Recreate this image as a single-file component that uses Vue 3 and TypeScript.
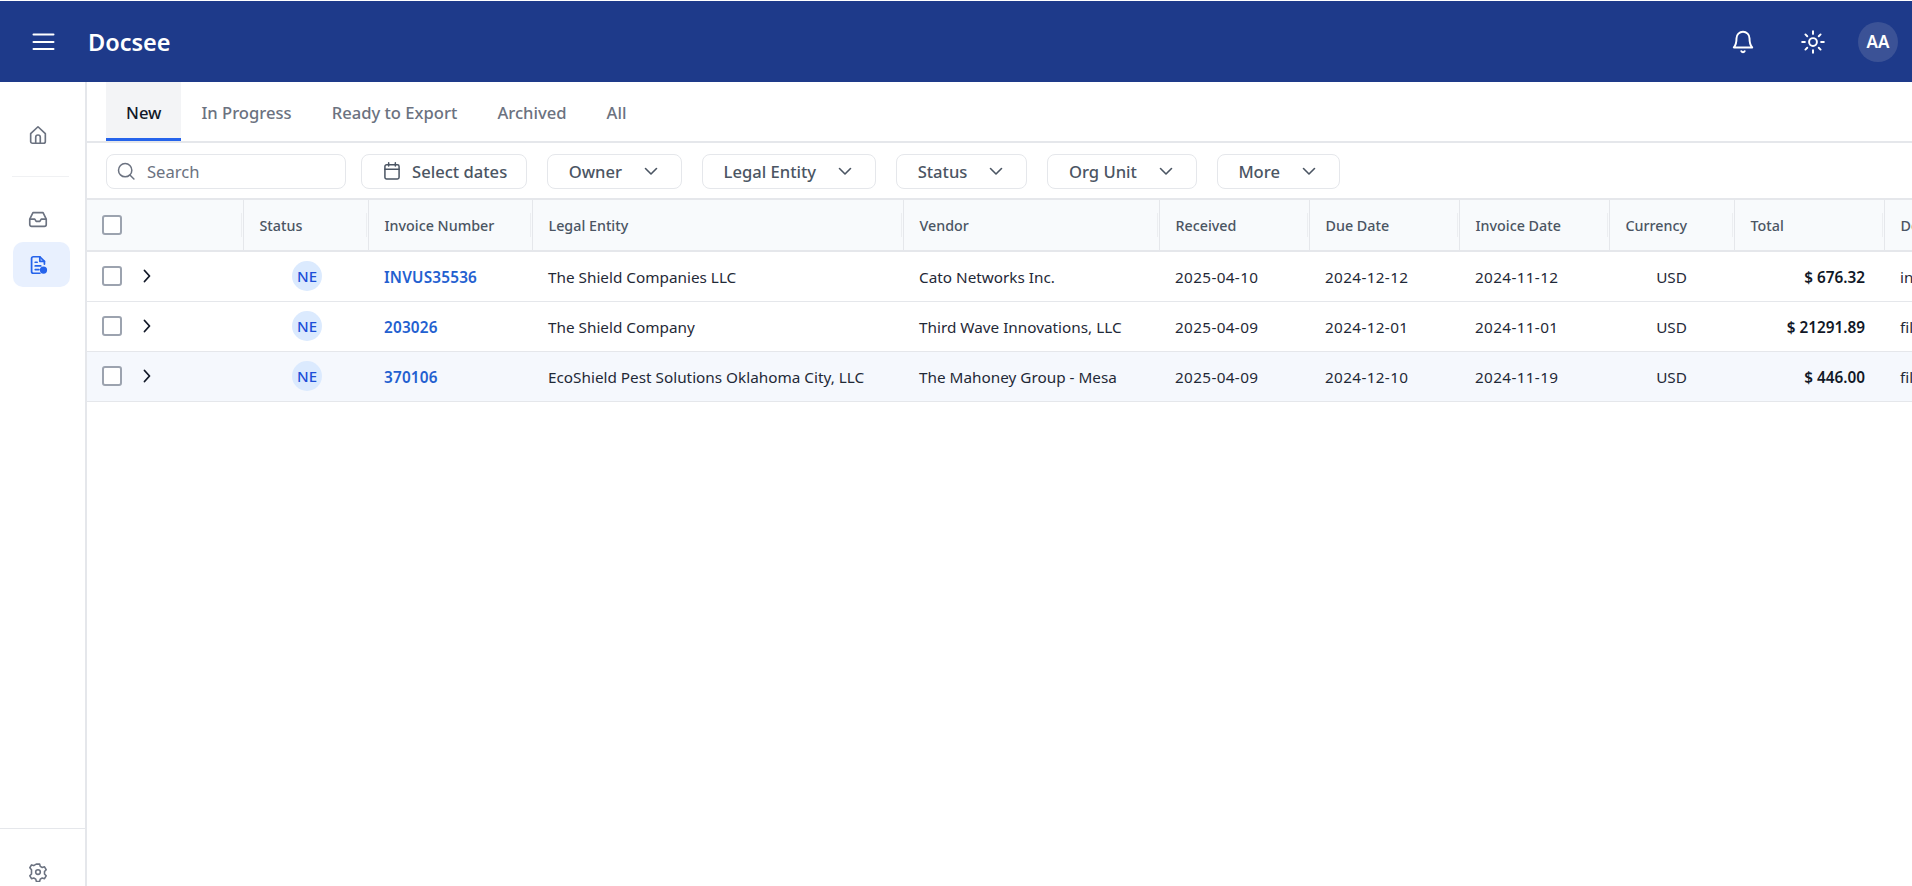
<template>
  <div class="app">
    <header class="topbar">
      <button class="menu-btn">
        <svg width="24" height="24" viewBox="0 0 24 24" fill="none" stroke="currentColor" stroke-width="2" stroke-linecap="round">
          <path d="M2.500 4.500h20M2.500 12h20M2.500 19h20" />
        </svg>
      </button>
      <div class="logo">Docsee</div>
      <div class="topbar-right">
        <svg class="bell" width="26" height="26" viewBox="0 0 24 24" fill="none" stroke="currentColor" stroke-width="1.800" stroke-linecap="round" stroke-linejoin="round">
          <path d="M18 8.500a6 6 0 0 0-12 0c0 6-2.500 8.500-2.500 8.500h17S18 14.500 18 8.500" />
          <path d="M10.500 20.500a1.700 1.700 0 0 0 3 0" />
        </svg>
        <svg class="sun" width="26" height="26" viewBox="0 0 24 24" fill="none" stroke="currentColor" stroke-width="1.800" stroke-linecap="round">
          <circle cx="12" cy="12" r="3.600" />
          <path d="M12 2v2.500M12 19.500V22M2 12h2.500M19.500 12H22M5 5l1.700 1.700M17.300 17.300 19 19M5 19l1.700-1.700M17.300 6.700 19 5" />
        </svg>
        <div class="avatar">AA</div>
      </div>
    </header>

    <div class="body">
      <aside class="sidebar">
        <div class="side-top">
          <div class="side-btn">
            <svg width="22" height="22" viewBox="0 0 24 24" fill="none" stroke="currentColor" stroke-width="1.800" stroke-linejoin="round">
              <path d="M4 10.500 12 3l8 7.500V19a2 2 0 0 1-2 2H6a2 2 0 0 1-2-2z" />
              <path d="M9.500 21v-6.500a2.500 2.500 0 0 1 5 0V21" />
            </svg>
          </div>
          <div class="side-sep"></div>
          <div class="side-btn inbox">
            <svg width="22" height="22" viewBox="0 0 24 24" fill="none" stroke="currentColor" stroke-width="1.800" stroke-linejoin="round">
              <path d="M6.500 4h11L21 11v6a2 2 0 0 1-2 2H5a2 2 0 0 1-2-2v-6z" />
              <path d="M3 11h5.500l1.500 2.500h4l1.500-2.500H21" />
            </svg>
          </div>
          <div class="side-btn active">
            <svg width="22" height="22" viewBox="0 0 24 24" fill="none" stroke="currentColor" stroke-width="1.900" stroke-linecap="round" stroke-linejoin="round">
              <path d="M19 11V8l-5-5H7a2 2 0 0 0-2 2v14a2 2 0 0 0 2 2h7" />
              <path d="M14 3v5h5M9 9h2M9 13h6M9 17h4" />
              <circle cx="18" cy="17.500" r="3" fill="currentColor" />
            </svg>
          </div>
        </div>
        <div class="side-bottom">
          <svg width="20" height="20" viewBox="0 0 24 24" fill="none" stroke="currentColor" stroke-width="1.900" stroke-linejoin="round">
            <path d="M10 2.500h4l.7 2.700 2.400 1.400 2.700-.8 2 3.400-2 2.300v2.800l2 2.300-2 3.400-2.700-.8-2.400 1.400-.7 2.700h-4l-.7-2.700-2.400-1.400-2.700.8-2-3.400 2-2.300V9.200l-2-2.300 2-3.400 2.700.8 2.400-1.400z" />
            <circle cx="12" cy="12" r="2.800" />
          </svg>
        </div>
      </aside>

      <main class="main">
        <nav class="tabs">
          <div
            v-for="tab in tabs"
            :key="tab"
            class="tab"
            :class="{ active: tab === activeTab }"
          >{{ tab }}</div>
        </nav>

        <div class="toolbar">
          <div class="search">
            <svg width="20" height="20" viewBox="0 0 24 24" fill="none" stroke="currentColor" stroke-width="1.800" stroke-linecap="round">
              <circle cx="11" cy="11" r="8" />
              <path d="m17 17 4.500 4.500" />
            </svg>
            <span>Search</span>
          </div>
          <button class="filter dates">
            <svg width="20" height="20" viewBox="0 0 24 24" fill="none" stroke="currentColor" stroke-width="1.800" stroke-linecap="round" stroke-linejoin="round">
              <rect x="3.500" y="4.500" width="17" height="17" rx="2" />
              <path d="M3.500 10h17M8 2v4M16 2v4" />
            </svg>
            Select dates
          </button>
          <button v-for="f in filters" :key="f" class="filter">
            {{ f }}
            <svg width="16" height="16" viewBox="0 0 16 16" fill="none" stroke="currentColor" stroke-width="1.600" stroke-linecap="round" stroke-linejoin="round">
              <path d="m2.500 5.500 5.500 5.500 5.500-5.500" />
            </svg>
          </button>
        </div>

        <div class="table-wrap">
          <table class="grid">
            <colgroup>
              <col v-for="(w, i) in colWidths" :key="i" :style="{ width: w + 'px' }" />
            </colgroup>
            <thead>
              <tr>
                <th class="select-col"><span class="check"></span></th>
                <th v-for="c in columns" :key="c">{{ c }}</th>
              </tr>
            </thead>
            <tbody>
              <tr v-for="row in rows" :key="row.invoice" :class="{ hovered: row.hovered }">
                <td class="select-col">
                  <div class="select-inner">
                    <span class="check"></span>
                    <svg width="14" height="14" viewBox="0 0 14 14" fill="none" stroke="#111827" stroke-width="1.800" stroke-linecap="round" stroke-linejoin="round">
                      <path d="m4.500 1.500 5 5.500-5 5.500" />
                    </svg>
                  </div>
                </td>
                <td class="center pill-cell"><span class="pill">NE</span></td>
                <td><a class="link">{{ row.invoice }}</a></td>
                <td>{{ row.entity }}</td>
                <td>{{ row.vendor }}</td>
                <td class="date">{{ row.received }}</td>
                <td class="date">{{ row.due }}</td>
                <td class="date">{{ row.date }}</td>
                <td class="center">USD</td>
                <td class="total">{{ row.total }}</td>
                <td>{{ row.doc }}</td>
              </tr>
            </tbody>
          </table>
        </div>
      </main>
    </div>
  </div>
</template>

<script setup lang="ts">
interface InvoiceRow {
  invoice: string;
  entity: string;
  vendor: string;
  received: string;
  due: string;
  date: string;
  total: string;
  doc: string;
  hovered?: boolean;
}

const tabs = ['New', 'In Progress', 'Ready to Export', 'Archived', 'All'];
const activeTab = 'New';
const filters = ['Owner', 'Legal Entity', 'Status', 'Org Unit', 'More'];

const columns = [
  'Status',
  'Invoice Number',
  'Legal Entity',
  'Vendor',
  'Received',
  'Due Date',
  'Invoice Date',
  'Currency',
  'Total',
  'Document',
];
const colWidths = [156, 125, 164, 371, 256, 150, 150, 150, 125, 150, 200];

const rows: InvoiceRow[] = [
  {
    invoice: 'INVUS35536',
    entity: 'The Shield Companies LLC',
    vendor: 'Cato Networks Inc.',
    received: '2025-04-10',
    due: '2024-12-12',
    date: '2024-11-12',
    total: '$ 676.32',
    doc: 'invoice.pdf',
  },
  {
    invoice: '203026',
    entity: 'The Shield Company',
    vendor: 'Third Wave Innovations, LLC',
    received: '2025-04-09',
    due: '2024-12-01',
    date: '2024-11-01',
    total: '$ 21291.89',
    doc: 'file.pdf',
  },
  {
    invoice: '370106',
    entity: 'EcoShield Pest Solutions Oklahoma City, LLC',
    vendor: 'The Mahoney Group - Mesa',
    received: '2025-04-09',
    due: '2024-12-10',
    date: '2024-11-19',
    total: '$ 446.00',
    doc: 'file.pdf',
    hovered: true,
  },
];
</script>

<style>
html,
body {
  margin: 0;
  background: #fff;
}
</style>

<style scoped>
.app {
  height: 886px;
  overflow: hidden;
  display: flex;
  flex-direction: column;
  font-family: "Noto Sans", "Open Sans", sans-serif;
  color: #1f2937;
}

.topbar {
  height: 81px;
  margin-top: 1px;
  flex: none;
  background: #1e3a8a;
  color: #fff;
  display: flex;
  align-items: center;
  padding-left: 31px;
  padding-right: 14px;
}

.menu-btn {
  background: none;
  border: none;
  color: #fff;
  padding: 0;
  display: flex;
  margin-right: 33px;
}

.logo {
  font-size: 23.500px;
  font-weight: 600;
}

.topbar-right {
  margin-left: auto;
  display: flex;
  align-items: center;
}

.bell {
  margin-right: 44px;
}

.sun {
  margin-right: 32px;
}

.avatar {
  width: 40px;
  height: 40px;
  border-radius: 50%;
  background: #3b5296;
  display: flex;
  align-items: center;
  justify-content: center;
  font-size: 17px;
  font-weight: 600;
}

.body {
  flex: 1;
  display: flex;
  min-height: 0;
}

.sidebar {
  width: 85px;
  flex: none;
  border-right: 2px solid #e5e7eb;
  display: flex;
  flex-direction: column;
  justify-content: space-between;
  color: #6b7280;
}

.side-top {
  padding: 30px 13px 0 13px;
  display: flex;
  flex-direction: column;
}

.side-btn {
  height: 45px;
  width: 57px;
  padding-left: 14px;
  box-sizing: border-box;
  display: flex;
  align-items: center;
}

.side-sep {
  height: 1px;
  background: #f0f1f3;
  margin: 19px 3px 32px -1px;
}

.side-btn.inbox {
  height: 22px;
  margin-bottom: 11px;
}

.side-btn.active {
  background: #e8f0fe;
  color: #2563eb;
  border-radius: 10px;
}

.side-bottom {
  border-top: 1px solid #e5e7eb;
  height: 58px;
  padding: 33px 0 0 28px;
  box-sizing: border-box;
}

.main {
  flex: 1;
  min-width: 0;
  overflow: hidden;
  display: flex;
  flex-direction: column;
}

.tabs {
  height: 59px;
  flex: none;
  display: flex;
  padding-left: 19px;
  border-bottom: 2px solid #e5e7eb;
}

.tab {
  padding: 1px 20px 0;
  display: flex;
  align-items: center;
  font-size: 16.600px;
  font-weight: 500;
  color: #6b7280;
}

.tab.active {
  background: #f3f4f6;
  color: #111827;
  box-shadow: inset 0 -3px 0 #2563eb;
}

.toolbar {
  height: 55px;
  flex: none;
  display: flex;
  align-items: center;
  gap: 20px;
  padding-left: 19px;
  padding-top: 1px;
  box-sizing: border-box;
}

.search,
.filter {
  height: 35px;
  box-sizing: border-box;
  border: 1px solid #e5e7eb;
  border-radius: 8px;
  background: #fff;
  display: flex;
  align-items: center;
  font-family: inherit;
}

.search svg,
.filter svg {
  margin-top: -1px;
}

.search {
  width: 240px;
  padding: 1px 0 0 9px;
  gap: 11px;
  color: #6b7280;
  font-size: 16.600px;
}

.filter {
  padding: 1px 22px 0 20.500px;
  gap: 21px;
  font-size: 16.600px;
  font-weight: 500;
  color: #4b5563;
}

.filter.dates {
  padding: 1px 19px 0 20px;
  gap: 10px;
  margin-left: -5px;
}

.table-wrap {
  flex: 1;
  overflow: hidden;
  border-top: 2px solid #e5e7eb;
}

.grid {
  table-layout: fixed;
  border-collapse: collapse;
  width: 1997px;
  font-size: 15.300px;
}

th {
  height: 51px;
  padding: 0 16px;
  box-sizing: border-box;
  text-align: left;
  font-size: 14.300px;
  font-weight: 500;
  color: #4b5563;
  background: #f8fafc;
  border-bottom: 2px solid #e5e7eb;
  border-right: 1px solid #e5e7eb;
  white-space: nowrap;
  overflow: hidden;
  position: relative;
}

th::after {
  content: "";
  position: absolute;
  right: 1px;
  top: 13px;
  height: 24px;
  width: 1px;
  background: #eceef1;
}

td {
  height: 50px;
  padding: 2px 16px 0;
  box-sizing: border-box;
  border-bottom: 1px solid #e5e7eb;
  white-space: nowrap;
  overflow: hidden;
}

td.date {
  letter-spacing: 0.35px;
}

tr.hovered td {
  background: #f5f8fd;
}

td.select-col,
th.select-col {
  padding: 0 0 0 15px;
}

.select-inner {
  display: flex;
  align-items: center;
  gap: 18px;
}

.check {
  display: block;
  width: 20px;
  height: 20px;
  box-sizing: border-box;
  border: 2px solid #9ca3af;
  border-radius: 3px;
  background: #fff;
}

.center {
  text-align: center;
}

td.pill-cell {
  padding: 0 15px 0 18px;
}

.pill {
  display: inline-flex;
  width: 30px;
  height: 30px;
  border-radius: 50%;
  background: #dbeafe;
  color: #1d4ed8;
  align-items: center;
  justify-content: center;
  font-size: 15px;
  font-weight: 500;
}

.link {
  color: #2360d0;
  font-weight: 600;
  letter-spacing: 0.2px;
}

td.total {
  text-align: right;
  font-weight: 600;
  padding-right: 19px;
  color: #111827;
}
</style>
